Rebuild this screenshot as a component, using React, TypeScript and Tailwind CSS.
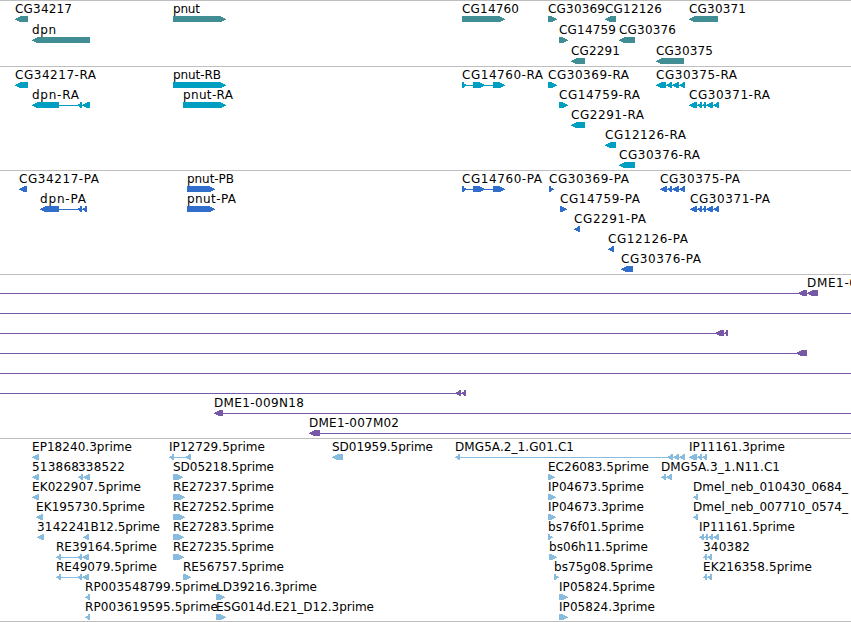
type Dir = 'l' | 'r';

interface Feature {
  row: number;
  dir: Dir;
  // exon ranges, in pixels along the region
  exons: number[][];
  label?: string;
  labelWidth?: number;
  line?: number[];
}

interface TrackData {
  id: string;
  color: string;
  height: number;
  pitch: number;
  features: Feature[];
}

const VIEW_WIDTH = 851;

// how far each pixel row of an arrow head stays back from the tip
const HEAD_STEPS = [5, 3, 1, 0, 2, 4];

const f = (row: number, dir: Dir, exons: number[][], label?: string, labelWidth?: number, line?: number[]): Feature => ({
  row,
  dir,
  exons,
  label,
  labelWidth,
  line,
});

const tracks: TrackData[] = [
  {
    id: 'gene',
    color: '#408e94',
    height: 66,
    pitch: 21,
    features: [
      f(0, 'l', [[15, 28]], 'CG34217', 57),
      f(0, 'r', [[173, 226]], 'pnut', 27),
      f(0, 'r', [[462, 505]], 'CG14760', 57),
      f(0, 'r', [[548, 557]], 'CG30369', 57),
      f(0, 'l', [[605, 616]], 'CG12126', 57),
      f(0, 'l', [[689, 718]], 'CG30371', 57),
      f(1, 'l', [[32, 90]], 'dpn', 24),
      f(1, 'r', [[559, 568]], 'CG14759', 57),
      f(1, 'l', [[619, 635]], 'CG30376', 57),
      f(2, 'l', [[571, 585]], 'CG2291', 49),
      f(2, 'l', [[656, 684]], 'CG30375', 57),
    ],
  },
  {
    id: 'transcript',
    color: '#009ec0',
    height: 104,
    pitch: 20,
    features: [
      f(0, 'l', [[15, 28]], 'CG34217-RA', 81),
      f(0, 'r', [[173, 226]], 'pnut-RB', 48),
      f(0, 'r', [[462, 467], [473, 485], [493, 505]], 'CG14760-RA', 81),
      f(0, 'r', [[548, 557]], 'CG30369-RA', 81),
      f(0, 'l', [[656, 666], [666, 672], [672, 679], [679, 685]], 'CG30375-RA', 81),
      f(1, 'l', [[32, 59], [77, 82], [82, 90]], 'dpn-RA', 47),
      f(1, 'r', [[183, 226]], 'pnut-RA', 50),
      f(1, 'r', [[559, 568]], 'CG14759-RA', 81),
      f(1, 'l', [[689, 697], [697, 702], [702, 706], [706, 713], [713, 719]], 'CG30371-RA', 81),
      f(2, 'l', [[571, 585]], 'CG2291-RA', 73),
      f(3, 'l', [[605, 616]], 'CG12126-RA', 81),
      f(4, 'l', [[619, 635]], 'CG30376-RA', 81),
    ],
  },
  {
    id: 'protein',
    color: '#316dca',
    height: 104,
    pitch: 20,
    features: [
      f(0, 'l', [[19, 27]], 'CG34217-PA', 80),
      f(0, 'r', [[187, 215]], 'pnut-PB', 47),
      f(0, 'r', [[462, 467], [473, 485], [493, 505]], 'CG14760-PA', 80),
      f(0, 'r', [[549, 554]], 'CG30369-PA', 80),
      f(0, 'l', [[660, 667], [667, 672], [672, 679], [679, 685]], 'CG30375-PA', 80),
      f(1, 'l', [[40, 59], [77, 82], [82, 87]], 'dpn-PA', 46),
      f(1, 'r', [[187, 215]], 'pnut-PA', 49),
      f(1, 'r', [[560, 567]], 'CG14759-PA', 80),
      f(1, 'l', [[690, 697], [697, 702], [702, 706], [706, 713], [713, 719]], 'CG30371-PA', 80),
      f(2, 'l', [[574, 580]], 'CG2291-PA', 72),
      f(3, 'l', [[608, 614]], 'CG12126-PA', 80),
      f(4, 'l', [[621, 633]], 'CG30376-PA', 80),
    ],
  },
  {
    id: 'bac',
    color: '#7658a6',
    height: 164,
    pitch: 20,
    features: [
      f(0, 'l', [[798, 807]], undefined, undefined, [0, 807]),
      f(0, 'l', [[807, 818]], 'DME1-0', 50),
      f(1, 'l', [], undefined, undefined, [0, VIEW_WIDTH]),
      f(2, 'l', [[715, 724], [724, 728]], undefined, undefined, [0, 728]),
      f(3, 'l', [[796, 807]], undefined, undefined, [0, 800]),
      f(4, 'l', [], undefined, undefined, [0, VIEW_WIDTH]),
      f(5, 'l', [[455, 461], [461, 466]], undefined, undefined, [0, 466]),
      f(6, 'l', [[214, 223]], 'DME1-009N18', 90, [220, VIEW_WIDTH]),
      f(7, 'l', [[309, 320]], 'DME1-007M02', 90, [316, VIEW_WIDTH]),
    ],
  },
  {
    id: 'est',
    color: '#88bcde',
    height: 184,
    pitch: 20,
    features: [
      f(0, 'l', [[32, 39]], 'EP18240.3prime', 100),
      f(0, 'l', [[169, 174], [185, 191]], 'IP12729.5prime', 96),
      f(0, 'l', [[332, 343]], 'SD01959.5prime', 101),
      f(0, 'l', [[455, 460], [667, 673], [673, 679], [679, 685]], 'DMG5A.2_1.G01.C1', 119),
      f(0, 'l', [[689, 697], [697, 702], [702, 707]], 'IP11161.3prime', 96),
      f(1, 'l', [[32, 39]], '513868', 47),
      f(1, 'l', [[78, 83], [83, 90]], '338522', 47),
      f(1, 'r', [[173, 183]], 'SD05218.5prime', 101),
      f(1, 'r', [[548, 555]], 'EC26083.5prime', 101),
      f(1, 'l', [[661, 666], [666, 672]], 'DMG5A.3_1.N11.C1', 119),
      f(2, 'l', [[32, 39]], 'EK022907.5prime', 109),
      f(2, 'r', [[173, 185]], 'RE27237.5prime', 101),
      f(2, 'r', [[548, 556]], 'IP04673.5prime', 96),
      f(2, 'l', [[693, 698]], 'Dmel_neb_010430_0684_', 155),
      f(3, 'l', [[36, 43]], 'EK195730.5prime', 109),
      f(3, 'r', [[173, 185]], 'RE27252.5prime', 101),
      f(3, 'r', [[548, 556]], 'IP04673.3prime', 96),
      f(3, 'l', [[693, 698]], 'Dmel_neb_007710_0574_', 155),
      f(4, 'l', [[37, 44]], '314224', 47),
      f(4, 'l', [[83, 89]], '1B12.5prime', 77),
      f(4, 'r', [[173, 184]], 'RE27283.5prime', 101),
      f(4, 'r', [[548, 553]], 'bs76f01.5prime', 96),
      f(4, 'l', [[699, 704], [704, 708], [708, 713], [713, 719]], 'IP11161.5prime', 96),
      f(5, 'l', [[56, 61], [77, 82], [82, 89]], 'RE39164.5prime', 101),
      f(5, 'r', [[173, 184]], 'RE27235.5prime', 101),
      f(5, 'r', [[549, 557]], 'bs06h11.5prime', 99),
      f(5, 'l', [[703, 707], [707, 712]], '340382', 47),
      f(6, 'l', [[56, 61], [77, 82], [82, 89]], 'RE49079.5prime', 101),
      f(6, 'r', [[183, 191]], 'RE56757.5prime', 101),
      f(6, 'r', [[554, 559]], 'bs75g08.5prime', 99),
      f(6, 'l', [[703, 707], [707, 712]], 'EK216358.5prime', 109),
      f(7, 'l', [[85, 90]], 'RP003548799.5prime', 133),
      f(7, 'r', [[216, 225]], 'LD39216.3prime', 101),
      f(7, 'r', [[559, 568]], 'IP05824.5prime', 96),
      f(8, 'l', [[85, 90]], 'RP003619595.5prime', 133),
      f(8, 'r', [[216, 226]], 'ESG014d.E21_D12.3prime', 158),
      f(8, 'r', [[559, 568]], 'IP05824.3prime', 96),
    ],
  },
];

function Exon({ start, end, y, dir }: { start: number; end: number; y: number; dir: Dir }) {
  const width = end - start;

  return (
    <g shapeRendering="crispEdges">
      {HEAD_STEPS.map((step, i) => {
        const inset = Math.min(step, width - 2);
        return <rect key={i} x={dir === 'l' ? start + inset : start} y={y + i} width={width - inset} height={1} />;
      })}
    </g>
  );
}

function FeatureGlyph({ feature, y }: { feature: Feature; y: number }) {
  const { exons, dir, label, labelWidth } = feature;
  const line = feature.line ?? (exons.length > 1 ? [exons[0][0] + 3, exons[exons.length - 1][1] - 3] : null);

  return (
    <g>
      {line && <rect x={line[0]} y={y + 3} width={line[1] - line[0]} height={1} shapeRendering="crispEdges" />}
      {exons.map(([start, end], i) => (
        <Exon key={i} start={start} end={end} y={y} dir={dir} />
      ))}
      {label && (
        <text
          x={exons[0][0]}
          y={y - 3}
          textLength={labelWidth}
          lengthAdjust="spacing"
          className="fill-black font-['DejaVu_Sans',sans-serif] text-[12px]"
        >
          {label}
        </text>
      )}
    </g>
  );
}

function Track({ track }: { track: TrackData }) {
  return (
    <section
      className="w-full overflow-hidden border-t border-[#bebebe] last:border-b"
      style={{ height: track.height }}
    >
      <svg width={VIEW_WIDTH} height={track.height - 1} fill={track.color} className="block max-w-none">
        {track.features.map((feature, i) => (
          <FeatureGlyph key={i} feature={feature} y={15 + feature.row * track.pitch} />
        ))}
      </svg>
    </section>
  );
}

export default function App() {
  return (
    <main className="flex h-[622px] w-[851px] flex-col overflow-hidden bg-white">
      {tracks.map((track) => (
        <Track key={track.id} track={track} />
      ))}
    </main>
  );
}
